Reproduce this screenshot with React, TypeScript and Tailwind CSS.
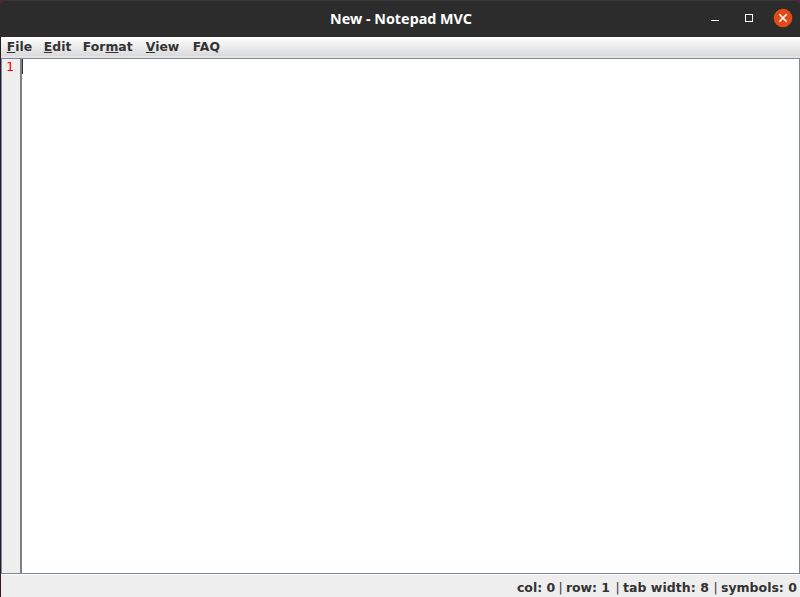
import React from "react";

const menus = [
  { before: "", key: "F", after: "ile", box: "w-[37px]" },
  { before: "", key: "E", after: "dit", box: "w-[39px]" },
  { before: "For", key: "m", after: "at", box: "w-[63px]" },
  { before: "", key: "V", after: "iew", box: "w-[47px]" },
  { before: "FAQ", key: "", after: "", box: "w-[40px]" },
];

const statusItems = [
  { label: "col: 0", box: "w-[43px]", tracking: "tracking-[-0.05px]" },
  { label: "row: 1", box: "w-[51px]", tracking: "tracking-[-0.1px]" },
  { label: "tab width: 8", box: "w-[92px]", tracking: "tracking-[0.04px]" },
  { label: "symbols: 0", box: "w-[77px]", tracking: "tracking-[0px]" },
];

function TitleBar() {
  return (
    <header className="flex h-[37px] shrink-0 bg-[#701539]">
      <div className="grid flex-1 grid-cols-[1fr_auto_1fr] items-center rounded-t-[5px] border-t border-[#383838] bg-[#2c2c2c]">
        <span />
        <h1 className="w-[141px] font-['Noto_Sans',sans-serif] text-[13.6px] leading-[18px] font-bold text-white">
          <svg width="141" height="18" className="block overflow-visible">
            <text x="0" y="14" textLength="142" lengthAdjust="spacingAndGlyphs" fill="currentColor">New - Notepad MVC</text>
          </svg>
        </h1>
        <svg width="110" height="36" viewBox="690 1 110 36" className="justify-self-end" fill="none">
          <path d="M711 20.5h8" stroke="#fff" />
          <rect x="745.5" y="14.5" width="7" height="7" stroke="#fff" />
          <circle cx="783" cy="18" r="9.3" fill="#e24a18" />
          <path d="M779.3 14.3l7.4 7.4m0-7.4l-7.4 7.4" stroke="#fff" strokeWidth="1.5" />
        </svg>
      </div>
    </header>
  );
}

function MenuBar() {
  return (
    <nav className="flex h-[19px] shrink-0 bg-gradient-to-b from-white to-[#dadada] pl-[5.8px] text-[12.4px] leading-[19px]">
      {menus.map((m) => (
        <div key={m.before + m.key} className={m.box}>
          {m.before}
          <span className="underline decoration-1 underline-offset-[1px] [text-decoration-skip-ink:none]">{m.key}</span>
          {m.after}
        </div>
      ))}
    </nav>
  );
}

function StatusBar() {
  return (
    <footer className="flex h-[23px] shrink-0 items-center justify-end border-t border-white bg-[#eee] pt-[3px] pr-[2px] text-[12.5px] leading-[16px] whitespace-nowrap">
      {statusItems.map((item, i) => (
        <React.Fragment key={item.label}>
          {i > 0 && <span className="w-[6px] shrink-0 indent-[-1.4px] font-normal">|</span>}
          <span className={`shrink-0 ${item.box} ${item.tracking}`}>{item.label}</span>
        </React.Fragment>
      ))}
    </footer>
  );
}

export default function App() {
  return (
    <div className="flex h-[597px] w-[800px] flex-col overflow-hidden bg-[#eee] font-['DejaVu_Sans',sans-serif] font-bold text-[#333]">
      <TitleBar />
      <div className="flex min-h-0 flex-1 flex-col border-l border-[#2c1a22]">
        <MenuBar />
        <div className="h-[2px] shrink-0 bg-[#e4e4e4]" />
        <main className="flex min-h-0 flex-1 border border-[#7a8a99] bg-white">
          <div className="w-[20px] border-r-2 border-[#808080] bg-[#eee] pl-[4px] font-['DejaVu_Sans_Mono',monospace] text-[13px] leading-[15px] font-normal text-[#f00]">
            1
          </div>
          <div className="h-[15px] w-px bg-[#333]" />
        </main>
        <StatusBar />
      </div>
    </div>
  );
}
